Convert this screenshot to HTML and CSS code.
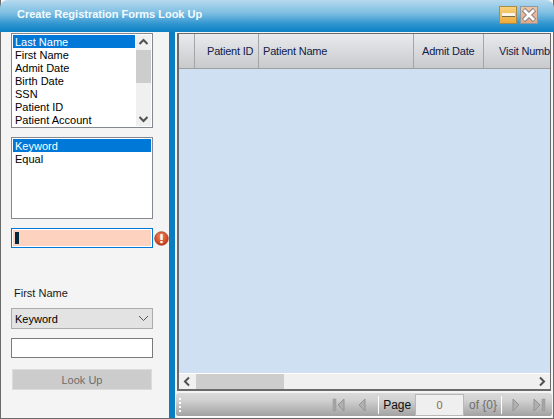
FILE: index.html
```html
<!DOCTYPE html>
<html lang="en">
<head>
<meta charset="utf-8">
<title>Create Registration Forms Look Up</title>
<link rel="stylesheet" href="styles.css">
</head>
<body>
<div class="window">
  <header class="titlebar">
    <span class="title">Create Registration Forms Look Up</span>
    <div class="win-buttons">
      <span class="win-btn min"><span class="min-bar"></span></span>
      <span class="win-btn close">
        <svg width="16" height="16" viewBox="0 0 16 16"><path d="M2.5 2.5 L13.5 13.5 M13.5 2.5 L2.5 13.5" stroke="#85807a" stroke-width="4.6"/><path d="M3 3 L13 13 M13 3 L3 13" stroke="#fff" stroke-width="2.8"/></svg>
      </span>
    </div>
  </header>
  <div class="content">
    <aside class="side">
      <div class="listbox fields">
        <ul class="items">
          <li class="sel">Last Name</li>
          <li>First Name</li>
          <li>Admit Date</li>
          <li>Birth Date</li>
          <li>SSN</li>
          <li>Patient ID</li>
          <li>Patient Account</li>
        </ul>
        <div class="vscroll">
          <svg width="15" height="15" viewBox="0 0 15 15"><path d="M3.5 9 L7.5 5 L11.5 9" fill="none" stroke="#505050" stroke-width="2"/></svg>
          <div class="vtrack"><div class="vthumb"></div></div>
          <svg width="15" height="15" viewBox="0 0 15 15"><path d="M3.5 6 L7.5 10 L11.5 6" fill="none" stroke="#505050" stroke-width="2"/></svg>
        </div>
      </div>
      <div class="listbox modes">
        <ul class="items">
          <li class="sel">Keyword</li>
          <li>Equal</li>
        </ul>
      </div>
      <div class="error-row">
        <div class="err-input"><span class="caret"></span></div>
        <svg class="err-icon" width="15" height="15" viewBox="0 0 15 15">
          <defs><radialGradient id="eg" cx="45%" cy="35%" r="70%"><stop offset="0" stop-color="#f58a5c"/><stop offset="1" stop-color="#c22c08"/></radialGradient></defs>
          <circle cx="7.5" cy="7.5" r="6.8" fill="url(#eg)" stroke="#9c4a30" stroke-width=".8"/>
          <rect x="6.3" y="3" width="2.4" height="6" fill="#fff"/>
          <rect x="6.3" y="10" width="2.4" height="2.2" fill="#fff"/>
        </svg>
      </div>
      <label class="field-label">First Name</label>
      <div class="combo">
        <span>Keyword</span>
        <svg width="11" height="7" viewBox="0 0 11 7"><path d="M1 1 L5.5 5.5 L10 1" fill="none" stroke="#555" stroke-width="1"/></svg>
      </div>
      <div class="text-input"></div>
      <div class="lookup">Look Up</div>
    </aside>
    <div class="splitter"></div>
    <main class="main">
      <div class="grid">
        <div class="grid-head">
          <div class="col c0"></div>
          <div class="col c1">Patient ID</div>
          <div class="col c2">Patient Name</div>
          <div class="col c3">Admit Date</div>
          <div class="col c4">Visit Numb</div>
        </div>
        <div class="grid-body"></div>
        <div class="hscroll">
          <svg width="17" height="15" viewBox="0 0 17 15"><path d="M10 3.5 L6 7.5 L10 11.5" fill="none" stroke="#505050" stroke-width="2"/></svg>
          <div class="hthumb"></div>
          <div class="hspace"></div>
          <svg width="17" height="15" viewBox="0 0 17 15"><path d="M7 3.5 L11 7.5 L7 11.5" fill="none" stroke="#505050" stroke-width="2"/></svg>
        </div>
      </div>
      <div class="navigator">
        <div class="grip"><i></i><i></i><i></i><i></i></div>
        <div class="nav-spacer"></div>
        <svg class="nav-ic" width="14" height="14" viewBox="0 0 14 14"><rect x="1" y="1" width="3" height="12" fill="#a4a4a4" stroke="#999" stroke-width=".5"/><path d="M12 1 V13 L6 7 Z" fill="#b0b0b0" stroke="#939393"/></svg>
        <svg class="nav-ic prev" width="14" height="14" viewBox="0 0 14 14"><path d="M10 1 V13 L4 7 Z" fill="#b0b0b0" stroke="#939393"/></svg>
        <span class="sep"></span>
        <span class="page">Page</span>
        <span class="page-box">0</span>
        <span class="of">of {0}</span>
        <span class="sep"></span>
        <svg class="nav-ic next" width="14" height="14" viewBox="0 0 14 14"><path d="M4 1 V13 L10 7 Z" fill="#b0b0b0" stroke="#939393"/></svg>
        <svg class="nav-ic" width="14" height="14" viewBox="0 0 14 14"><path d="M2 1 V13 L8 7 Z" fill="#b0b0b0" stroke="#939393"/><rect x="10" y="1" width="3" height="12" fill="#a4a4a4" stroke="#999" stroke-width=".5"/></svg>
      </div>
    </main>
  </div>
</div>
</body>
</html>
```

FILE: styles.css
```css
html, body {
  margin: 0;
  padding: 0;
  height: 100%;
}
body {
  width: 554px;
  height: 419px;
  overflow: hidden;
  background: #fff;
  font-family: "Liberation Sans", Arial, sans-serif;
  font-size: 11px;
  color: #000;
}
.window {
  width: 554px;
  height: 419px;
  display: flex;
  flex-direction: column;
  box-sizing: border-box;
  border: 1px solid #6b6b6b;
  border-top: 0;
  background: #f4f4f4;
}
.titlebar {
  height: 32px;
  flex: none;
  margin: 0 -1px;
  display: flex;
  align-items: center;
  justify-content: space-between;
  padding: 0 16px 0 17px;
  border-radius: 8px 8px 0 0;
  background: linear-gradient(#b5d9ee 0%, #7fbfe2 40%, #2f95d0 75%, #0a7fc4 100%);
}
.title {
  color: #f4fbff;
  font-size: 11px;
  font-weight: bold;
  position: relative;
  top: -2px;
}
.win-buttons {
  display: flex;
  gap: 3px;
  position: relative;
  top: -1px;
}
.win-btn {
  width: 18px;
  height: 18px;
  box-sizing: border-box;
  display: flex;
  align-items: center;
  justify-content: center;
  border: 1px solid #8a9aa0;
}
.min {
  background: linear-gradient(#f8d27a, #eeaa3c);
  border-color: #a88a4a;
}
.min-bar {
  width: 13px;
  height: 3px;
  background: #fdf6e6;
  border-bottom: 1px solid #7a6a4a;
}
.close {
  background: linear-gradient(#f0c4a8, #e6a888);
  overflow: hidden;
}
.content {
  flex: 1;
  display: flex;
  min-height: 0;
}
.side {
  width: 168px;
  flex: none;
  box-sizing: border-box;
  padding: 1px 0 0 10px;
  display: flex;
  flex-direction: column;
  align-items: flex-start;
}
.listbox {
  width: 142px;
  box-sizing: border-box;
  border: 1px solid #828790;
  background: #fff;
  padding: 1px;
  display: flex;
}
.fields { height: 95px; }
.modes { height: 82px; margin-top: 9px; }
.items {
  list-style: none;
  margin: 0;
  padding: 0;
  flex: 1;
  font-size: 11px;
  line-height: 15px;
  min-width: 0;
}
.items li {
  height: 13px;
  padding-left: 2px;
  white-space: nowrap;
  overflow: hidden;
}
.items .sel {
  background: #0078d7;
  color: #fff;
}
.vscroll {
  width: 15px;
  margin-left: 1px;
  flex: none;
  background: #f0f0f0;
  display: flex;
  flex-direction: column;
}
.vtrack { flex: 1; }
.vthumb {
  height: 33px;
  background: #cdcdcd;
}
.error-row {
  margin-top: 9px;
  display: flex;
  align-items: center;
  gap: 1px;
}
.err-input {
  width: 142px;
  height: 20px;
  box-sizing: border-box;
  border: 1px solid #0078d7;
  outline: 1px solid #fff;
  outline-offset: -2px;
  background: #fdd3c0;
  padding: 3px 0 0 3px;
}
.caret {
  display: block;
  width: 4px;
  height: 12px;
  background: #02283c;
}
.err-icon { flex: none; }
.field-label {
  margin: 38px 0 0 3px;
  height: 14px;
  line-height: 14px;
  font-size: 11px;
  color: #1a1a1a;
}
.combo {
  margin-top: 8px;
  width: 142px;
  height: 21px;
  box-sizing: border-box;
  border: 1px solid #acacac;
  background: #e3e3e3;
  display: flex;
  align-items: center;
  justify-content: space-between;
  padding: 0 3px;
}
.text-input {
  margin-top: 9px;
  width: 142px;
  height: 20px;
  box-sizing: border-box;
  border: 1px solid #7a7a7a;
  background: #fff;
}
.lookup {
  margin: 11px 0 0 1px;
  width: 140px;
  height: 21px;
  box-sizing: border-box;
  border: 1px solid #dcdcdc;
  background: #cccccc;
  color: #6d6d6d;
  display: flex;
  align-items: center;
  justify-content: center;
}
.splitter {
  width: 6px;
  flex: none;
  background: #0a7cc2;
}
.main {
  flex: 1;
  min-width: 0;
  display: flex;
  flex-direction: column;
  padding: 1px;
  background: #f4f4f4;
}
.grid {
  margin: 0 1px;
  flex: none;
  height: 358px;
  box-sizing: border-box;
  border: 2px solid #6a6a6a;
  border-width: 1px 1px 2px 2px;
  display: flex;
  flex-direction: column;
  background: #fff;
  overflow: hidden;
}
.grid-head {
  height: 34px;
  flex: none;
  display: flex;
  border-bottom: 1px solid #a0a0a0;
  background: linear-gradient(#e8eaed, #c9cacc);
  font-size: 11px;
  letter-spacing: -.2px;
  color: #10204a;
  white-space: nowrap;
}
.col {
  box-sizing: border-box;
  flex: none;
  border-right: 1px solid #a5a5a5;
  display: flex;
  align-items: center;
  overflow: hidden;
}
.c0 { width: 16px; }
.c1 { width: 64px; padding-left: 12px; }
.c2 { width: 155px; padding-left: 4px; }
.c3 { width: 70px; padding-left: 8px; }
.c4 { flex: 1; padding-left: 15px; border-right: 0; }
.grid-body {
  flex: 1;
  background: #cfe0f3;
}
.hscroll {
  height: 15px;
  flex: none;
  margin-top: 1px;
  background: #f0f0f0;
  display: flex;
  align-items: stretch;
}
.hthumb {
  width: 88px;
  background: #cdcdcd;
}
.hspace { flex: 1; }
.navigator {
  margin-top: 2px;
  flex: 1;
  display: flex;
  align-items: center;
  padding-right: 6px;
  border-radius: 3px;
  background: linear-gradient(#dadada, #d2d2d2 30%, #a2a2a2);
  border-bottom: 1px solid #fff;
}
.grip {
  width: 3px;
  margin-left: 3px;
  display: flex;
  flex-direction: column;
  gap: 2px;
}
.grip i {
  display: block;
  width: 2px;
  height: 2px;
  background: #fff;
}
.nav-spacer { flex: 1; }
.nav-ic { flex: none; }
.nav-ic.prev { margin: 0 9px 0 9px; }
.nav-ic.next { margin: 0 9px 0 3px; }
.sep {
  width: 1px;
  height: 18px;
  background: #fff;
  margin-right: 4px;
}
.page {
  color: #111;
  font-size: 12px;
  letter-spacing: -.1px;
  margin-right: 4px;
}
.page-box {
  width: 49px;
  height: 22px;
  box-sizing: border-box;
  border: 1px solid #b8b8b8;
  background: #efefef;
  color: #8a6a48;
  display: flex;
  align-items: center;
  justify-content: center;
}
.of {
  color: #6f6f6f;
  font-size: 12px;
  margin: 0 4px 0 5px;
}
```
